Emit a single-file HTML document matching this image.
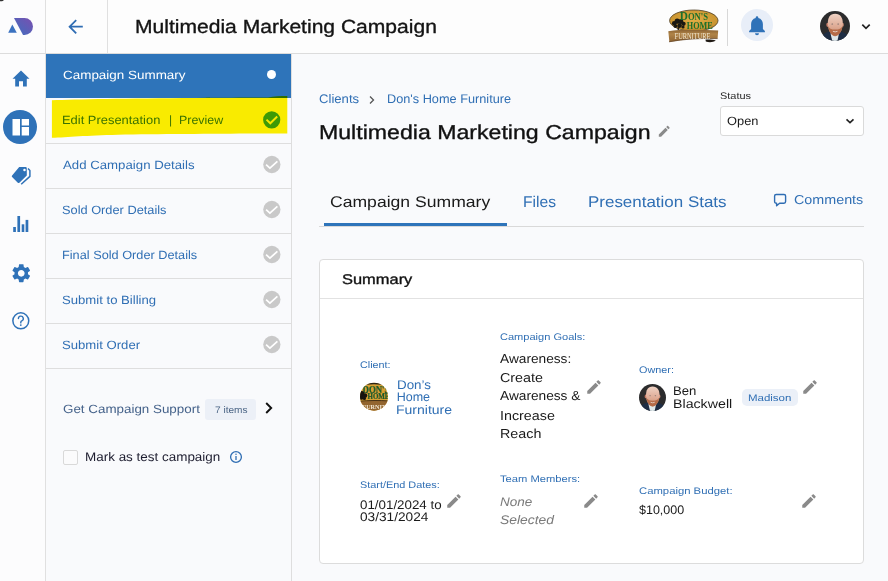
<!DOCTYPE html>
<html><head><meta charset="utf-8">
<style>
*{box-sizing:border-box;margin:0;padding:0}
html,body{width:888px;height:581px;overflow:hidden;background:#f9fafc;font-family:"Liberation Sans",sans-serif;position:relative}
.a{position:absolute}
.t{position:absolute;white-space:pre;line-height:1;transform-origin:0 0;text-rendering:geometricPrecision}
svg{position:absolute;display:block}
</style></head><body>

<!-- left icon rail -->
<div class="a" style="left:0;top:0;width:46px;height:581px;background:#fcfcfd;border-right:1px solid #e0e0e0"></div>
<!-- header -->
<div class="a" style="left:46px;top:0;width:842px;height:54px;background:#fdfdfd;border-bottom:1px solid #dcdcdc"></div>
<div class="a" style="left:0;top:53px;width:46px;height:1px;background:#dcdcdc"></div>
<div class="a" style="left:107px;top:0;width:1px;height:53px;background:#e0e0e0"></div>

<!-- logo -->
<svg style="left:0;top:0" width="45" height="53" viewBox="0 0 45 53">
  <defs><linearGradient id="lg" x1="0" y1="1" x2="1" y2="0"><stop offset="0" stop-color="#3d6fc0"/><stop offset="1" stop-color="#7a4fb0"/></linearGradient></defs>
  <path d="M8.2 32.7 L12.3 24.6 L16.8 32.7 Z" fill="#3b72c0"/>
  <path d="M14 18 L24.5 18 A8.5 8.5 0 0 1 24.5 35 L23 35 Z" fill="url(#lg)"/>
</svg>

<!-- back arrow -->
<svg style="left:66px;top:18px" width="18" height="18" viewBox="0 0 18 18">
  <path d="M16.8 8.7 H3.6 M10.2 2.1 L3.6 8.7 L10.2 15.3" stroke="#2f6db3" stroke-width="1.8" fill="none" stroke-linecap="butt" stroke-linejoin="miter"/>
</svg>


<!-- rail icons -->
<svg style="left:11px;top:69px" width="20" height="19" viewBox="0 0 20 19">
  <path d="M10 1.5 L18.5 9.7 H15.8 V17.5 H12 V12.2 H8 V17.5 H4.2 V9.7 H1.5 Z" fill="#2f72b8"/>
</svg>
<svg style="left:3px;top:110px" width="34" height="34" viewBox="0 0 34 34">
  <circle cx="17" cy="17" r="17" fill="#2f72b8"/>
  <rect x="9.5" y="9" width="7.5" height="16.5" fill="#fff"/>
  <rect x="18.7" y="9" width="7.3" height="6.5" fill="#fff"/>
  <rect x="18.7" y="17" width="7.3" height="8.5" fill="#fff"/>
</svg>
<svg style="left:11px;top:166px" width="21" height="20" viewBox="0 0 21 20">
  <path d="M8.2 0.9 H14.5 Q15.8 0.9 15.8 2.2 V9.4 L8.4 16.7 Q7.6 17.4 6.8 16.7 L1.1 11 Q0.3 10.2 1.1 9.4 Z" fill="#2f72b8"/>
  <circle cx="13.5" cy="4.1" r="1.25" fill="#fff"/>
  <path d="M17 2.4 L18.9 4.4 V10.4 L10.2 18.3" stroke="#2f72b8" stroke-width="1.5" fill="none" stroke-linejoin="round"/>
</svg>
<svg style="left:12px;top:215px" width="18" height="18" viewBox="0 0 18 18">
  <rect x="1.2" y="12" width="2.7" height="5" fill="#2f72b8"/>
  <rect x="5.4" y="1" width="2.7" height="16" fill="#2f72b8"/>
  <rect x="9.7" y="9.3" width="2.6" height="7.7" fill="#2f72b8"/>
  <rect x="13.6" y="4.9" width="2.7" height="12.1" fill="#2f72b8"/>
</svg>
<svg style="left:9.5px;top:261.8px" width="22.5" height="22.5" viewBox="0 0 24 24">
  <path fill="#2f72b8" d="M19.14 12.94c.04-.3.06-.61.06-.94 0-.32-.02-.64-.07-.94l2.03-1.58c.18-.14.23-.41.12-.61l-1.92-3.32c-.12-.22-.37-.29-.59-.22l-2.39.96c-.5-.38-1.03-.7-1.62-.94l-.36-2.54c-.04-.24-.24-.41-.48-.41h-3.84c-.24 0-.43.17-.47.41l-.36 2.54c-.59.24-1.13.57-1.62.94l-2.39-.96c-.22-.08-.47 0-.59.22L2.74 8.87c-.12.21-.08.47.12.61l2.03 1.58c-.05.3-.09.63-.09.94s.02.64.07.94l-2.03 1.58c-.18.14-.23.41-.12.61l1.92 3.32c.12.22.37.29.59.22l2.39-.96c.5.38 1.03.7 1.62.94l.36 2.54c.05.24.24.41.48.41h3.84c.24 0 .44-.17.47-.41l.36-2.54c.59-.24 1.13-.56 1.62-.94l2.39.96c.22.08.47 0 .59-.22l1.92-3.32c.12-.22.07-.47-.12-.61l-2.01-1.58zM12 15.6c-1.98 0-3.6-1.62-3.6-3.6s1.62-3.6 3.6-3.6 3.6 1.62 3.6 3.6-1.62 3.6-3.6 3.6z"/>
</svg>
<svg style="left:11px;top:311px" width="20" height="20" viewBox="0 0 20 20">
  <circle cx="9.8" cy="9.8" r="7.95" stroke="#2f72b8" stroke-width="1.5" fill="none"/>
  <path d="M7.4 7.6 a2.45 2.45 0 1 1 3.4 2.25 c-.65.3 -1 .75 -1 1.5 v.55" stroke="#2f72b8" stroke-width="1.4" fill="none" stroke-linecap="round"/>
  <circle cx="9.8" cy="14.1" r="0.9" fill="#2f72b8"/>
</svg>

<!-- header right -->
<div class="a" style="left:727px;top:9px;width:1px;height:37px;background:#d8d8d8"></div>
<div class="a" style="left:741px;top:9px;width:32px;height:32px;border-radius:50%;background:#e8eef8"></div>
<svg style="left:748px;top:15px" width="18" height="21" viewBox="0 0 18 21">
  <path d="M9 1.2 a1.3 1.3 0 0 1 1.3 1.3 v.5 c2.9 .7 4.6 3.2 4.6 6.1 v4.9 l2 2 v1.2 H1.1 v-1.2 l2 -2 V9.1 c0 -2.9 1.7 -5.4 4.6 -6.1 v-.5 A1.3 1.3 0 0 1 9 1.2Z" fill="#2f72b8"/>
  <path d="M7 18.3 h4 a2 2 0 0 1 -4 0Z" fill="#2f72b8"/>
</svg>



<svg style="left:660px;top:5px" width="70" height="45" viewBox="660 5 70 45">
  <defs><radialGradient id="og" cx="0.5" cy="0.45" r="0.6"><stop offset="0" stop-color="#e3ae45"/><stop offset="1" stop-color="#c48f2c"/></radialGradient>
  <linearGradient id="bg2" x1="0" y1="0" x2="0" y2="1"><stop offset="0" stop-color="#8a6232"/><stop offset="0.35" stop-color="#b08448"/><stop offset="1" stop-color="#8e6434"/></linearGradient></defs>
  <ellipse cx="693.8" cy="20.6" rx="24.2" ry="10.6" fill="url(#og)" stroke="#4d3d24" stroke-width="0.8"/>
  <g fill="#1a1812">
    <circle cx="674.2" cy="23.2" r="2.3"/><circle cx="677.2" cy="21.2" r="2.6"/><circle cx="680.8" cy="21.6" r="2.5"/>
    <circle cx="683.6" cy="23.8" r="2.1"/><circle cx="675.4" cy="26" r="1.9"/><circle cx="679.6" cy="25.6" r="2.3"/><circle cx="683" cy="27" r="1.6"/>
    <rect x="677.6" y="26" width="1.3" height="4"/>
  </g>
  <text x="679.7" y="20.4" font-family="Liberation Serif" font-size="12.5" font-weight="bold" fill="#1c6f2b" textLength="28.3" lengthAdjust="spacingAndGlyphs">D<tspan font-size="9.5">ON'S</tspan></text>
  <text x="686.8" y="29" font-family="Liberation Serif" font-size="9.8" font-weight="bold" fill="#1c6f2b" textLength="26" lengthAdjust="spacingAndGlyphs">HOME</text>
  <path d="M668.3 31.2 C680 29.2 700 29.6 718.2 30.4 L717.6 38.6 C700 38.2 684 39.2 669.4 42 Z" fill="url(#bg2)"/>
  <path d="M669 41.8 C684 39 700 38.1 717.6 38.6" stroke="#5e4022" stroke-width="0.7" fill="none"/>
  <text x="674.6" y="39.2" font-family="Liberation Serif" font-size="7.6" fill="#f1e6cf" textLength="35.8" lengthAdjust="spacingAndGlyphs">FURNITURE</text>
  <path d="M705.5 39.6 C709 39.4 713 39.6 715.8 40.6 C713 42.6 709 42.6 705.8 41.6 Z" fill="#201a14"/>
</svg>
<svg style="left:820px;top:11px" width="30" height="30" viewBox="0 0 30 30">
  <defs><clipPath id="ac"><circle cx="15" cy="15" r="15"/></clipPath>
  <linearGradient id="acs" x1="0" y1="0" x2="0" y2="1"><stop offset="0" stop-color="#efd2c4"/><stop offset="0.6" stop-color="#deaa94"/><stop offset="1" stop-color="#c98a6c"/></linearGradient></defs>
  <g clip-path="url(#ac)">
  <rect width="30" height="30" fill="#2c2c2d"/>
  <path d="M-1 31 C1 24 5 21.5 10 20.5 L20 20.5 C25 21.5 29 24 31 31 Z" fill="#1e2d44"/>
  <path d="M10.5 22.5 L19 22.5 L17.2 31 L12.5 31 Z" fill="#dfe8ea"/>
  <ellipse cx="7.6" cy="13.8" rx="1.3" ry="2.1" fill="#c47a66"/>
  <ellipse cx="22.6" cy="13.8" rx="1.2" ry="2" fill="#c98a74"/>
  <path d="M15.1 2.8 C20.5 2.8 22.8 7 22.8 12.5 C22.8 19 19.5 24.5 15.1 24.5 C10.7 24.5 7.8 19 7.8 12.5 C7.8 7 9.7 2.8 15.1 2.8Z" fill="url(#acs)"/>
  <path d="M8 14.5 C8.8 20 11.2 25 15.2 25.2 C19.2 25 21.8 20 22.6 14.5 C21.5 17.5 19.5 18.6 15.2 18.6 C11 18.6 9 17.5 8 14.5Z" fill="#b06440" opacity="0.85"/>
  <path d="M12.9 20.3 Q15.2 21.5 17.5 20.3" stroke="#e9d6cc" stroke-width="0.9" fill="none"/>
  <ellipse cx="12.3" cy="13" rx="0.9" ry="0.5" fill="#7a6a68"/>
  <ellipse cx="18.2" cy="13" rx="0.9" ry="0.5" fill="#7a6a68"/>
  </g>
</svg>
<svg style="left:858px;top:21px" width="16" height="12" viewBox="0 0 16 12">
  <path d="M4.3 3.6 L8 7.3 L11.7 3.6" stroke="#222" stroke-width="1.7" fill="none"/>
</svg>
<svg style="left:0;top:0" width="6" height="3" viewBox="0 0 6 3"><ellipse cx="0.3" cy="0" rx="3.4" ry="1.3" fill="#333"/></svg>

<!-- nav panel -->
<div class="a" style="left:46px;top:54px;width:246px;height:527px;background:#f9fafc;border-right:1px solid #dedede"></div>
<div class="a" style="left:46px;top:54px;width:245px;height:44px;background:#2e74ba"></div>
<div class="a" style="left:267px;top:70px;width:9px;height:9px;border-radius:50%;background:#fff"></div>

<div class="a" style="left:46px;top:143px;width:245px;height:1px;background:#dedede"></div>
<div class="a" style="left:46px;top:188px;width:245px;height:1px;background:#dedede"></div>
<div class="a" style="left:46px;top:233px;width:245px;height:1px;background:#dedede"></div>
<div class="a" style="left:46px;top:278px;width:245px;height:1px;background:#dedede"></div>
<div class="a" style="left:46px;top:323px;width:245px;height:1px;background:#dedede"></div>
<div class="a" style="left:46px;top:368px;width:245px;height:1px;background:#dedede"></div>

<!-- highlighter -->
<svg style="left:46px;top:94px;mix-blend-mode:multiply" width="246" height="50" viewBox="0 0 246 50">
  <path d="M5.9 6.2 C30 5.2 80 4.3 150 3.9 C190 3.7 215 3.6 222 3.4 C228 2.2 234 1.9 241.3 1.9 L241.3 39.4 C200 39.6 120 40 72 40.7 C40 41.3 22 43.4 5.9 43.7 Z" fill="#fff000"/>
</svg>


<svg style="left:262px;top:110px" width="20" height="20" viewBox="0 0 20 20">
  <circle cx="9.7" cy="9.8" r="8.6" fill="#3d9a06"/>
  <path d="M4.5 9.6 L8.3 13.3 L15.2 6.5" stroke="#f8e800" stroke-width="1.9" fill="none"/>
</svg>
<svg style="left:262px;top:155px" width="20" height="20" viewBox="0 0 20 20">
  <circle cx="9.85" cy="9.5" r="8.65" fill="#c9c9c9"/>
  <path d="M4.1 9.7 L7.9 13.1 L15.4 6.4" stroke="#fff" stroke-width="1.75" fill="none"/>
</svg>
<svg style="left:262px;top:200px" width="20" height="20" viewBox="0 0 20 20">
  <circle cx="9.85" cy="9.5" r="8.65" fill="#c9c9c9"/>
  <path d="M4.1 9.7 L7.9 13.1 L15.4 6.4" stroke="#fff" stroke-width="1.75" fill="none"/>
</svg>
<svg style="left:262px;top:245px" width="20" height="20" viewBox="0 0 20 20">
  <circle cx="9.85" cy="9.5" r="8.65" fill="#c9c9c9"/>
  <path d="M4.1 9.7 L7.9 13.1 L15.4 6.4" stroke="#fff" stroke-width="1.75" fill="none"/>
</svg>
<svg style="left:262px;top:290px" width="20" height="20" viewBox="0 0 20 20">
  <circle cx="9.85" cy="9.5" r="8.65" fill="#c9c9c9"/>
  <path d="M4.1 9.7 L7.9 13.1 L15.4 6.4" stroke="#fff" stroke-width="1.75" fill="none"/>
</svg>
<svg style="left:262px;top:335px" width="20" height="20" viewBox="0 0 20 20">
  <circle cx="9.85" cy="9.5" r="8.65" fill="#c9c9c9"/>
  <path d="M4.1 9.7 L7.9 13.1 L15.4 6.4" stroke="#fff" stroke-width="1.75" fill="none"/>
</svg>

<div class="a" style="left:205px;top:399px;width:51px;height:21px;border-radius:3px;background:#ecf0f7"></div>
<svg style="left:263px;top:401px" width="12" height="14" viewBox="0 0 12 14">
  <path d="M3.2 2 L8.2 7 L3.2 12" stroke="#111" stroke-width="1.9" fill="none"/>
</svg>
<div class="a" style="left:63px;top:450px;width:15px;height:15px;border:1px solid #d9d9d9;border-radius:2px;background:#fbfbfc"></div>
<svg style="left:229px;top:450px" width="14" height="14" viewBox="0 0 14 14">
  <circle cx="7" cy="7" r="5.4" stroke="#2f6db3" stroke-width="1.3" fill="none"/>
  <rect x="6.35" y="6" width="1.3" height="4" fill="#2f6db3"/>
  <circle cx="7" cy="4.3" r="0.75" fill="#2f6db3"/>
</svg>


<!-- main content -->
<svg style="left:367px;top:94px" width="10" height="12" viewBox="0 0 10 12">
  <path d="M3 2.5 L6.5 6 L3 9.5" stroke="#555" stroke-width="1.3" fill="none"/>
</svg>
<svg style="left:656.6px;top:124px" width="14.5" height="14.5" viewBox="0 0 24 24">
  <path fill="#8a8a8a" d="M3 17.25V21h3.75L17.81 9.94l-3.75-3.75L3 17.25zM20.71 7.04c.39-.39.39-1.02 0-1.41l-2.34-2.34c-.39-.39-1.02-.39-1.41 0l-1.83 1.83 3.75 3.75 1.83-1.83z"/>
</svg>

<div class="a" style="left:720px;top:106px;width:144px;height:30px;border:1px solid #dadada;border-radius:3px;background:#fff"></div>
<svg style="left:843px;top:113.5px" width="14" height="14" viewBox="0 0 14 14">
  <path d="M3.5 5.3 L7 8.6 L10.5 5.3" stroke="#222" stroke-width="1.6" fill="none"/>
</svg>

<!-- tabs -->
<svg style="left:772px;top:192px" width="16" height="16" viewBox="0 0 16 16">
  <path d="M4.2 2.5 H12 Q13.6 2.5 13.6 4.1 V9.6 Q13.6 11.2 12 11.2 H7.6 L4.6 13.8 V11.2 Q2.6 11.2 2.6 9.6 V4.1 Q2.6 2.5 4.2 2.5 Z" stroke="#2f6db3" stroke-width="1.4" fill="none" stroke-linejoin="round"/>
</svg>
<div class="a" style="left:319px;top:226px;width:545px;height:1px;background:#d9d9d9"></div>
<div class="a" style="left:324px;top:223px;width:183px;height:3px;background:#2e74ba"></div>

<!-- card -->
<div class="a" style="left:319px;top:259px;width:545px;height:305px;border:1px solid #dcdcdc;border-radius:4px;background:#fff"></div>
<div class="a" style="left:320px;top:298px;width:543px;height:1px;background:#e2e2e2"></div>

<svg style="left:359px;top:382px" width="30" height="30" viewBox="359 382 30 30">
  <defs><clipPath id="cc"><circle cx="374" cy="396.7" r="14"/></clipPath></defs>
  <g clip-path="url(#cc)">
  <rect x="359" y="382" width="30" height="30" fill="#d8a032"/>
  <path d="M362 386 C367 382.5 381 382.5 386 386" stroke="#2a2418" stroke-width="1.6" fill="none"/>
  <text x="362.5" y="392.8" font-family="Liberation Serif" font-size="9.5" font-weight="bold" fill="#1a6a2a" stroke="#123" stroke-width="0.2" textLength="27" lengthAdjust="spacingAndGlyphs">DON'S</text>
  <text x="367.5" y="399.4" font-family="Liberation Serif" font-size="7.8" font-weight="bold" fill="#1a6a2a" stroke="#123" stroke-width="0.2" textLength="22" lengthAdjust="spacingAndGlyphs">HOME</text>
  <g fill="#16140f"><circle cx="361.8" cy="393.6" r="2.6"/><circle cx="365" cy="395.6" r="2.3"/><circle cx="361.6" cy="397.6" r="2.2"/><circle cx="364.4" cy="398.4" r="1.6"/></g>
  <path d="M359 401.6 C368 400.6 380 400.6 389 401.2 L389 412 L359 412 Z" fill="#93652f"/>
  <path d="M359 401.3 C368 400.3 380 400.3 389 400.9" stroke="#3a2814" stroke-width="0.9" fill="none"/>
  <text x="362.4" y="408.6" font-family="Liberation Serif" font-size="6.6" font-weight="bold" fill="#f4ead6" textLength="23.5" lengthAdjust="spacingAndGlyphs">FURNIT</text>
  </g>
</svg>

<svg style="left:585px;top:378px" width="18" height="18" viewBox="0 0 24 24">
  <path fill="#8a8a8a" d="M3 17.25V21h3.75L17.81 9.94l-3.75-3.75L3 17.25zM20.71 7.04c.39-.39.39-1.02 0-1.41l-2.34-2.34c-.39-.39-1.02-.39-1.41 0l-1.83 1.83 3.75 3.75 1.83-1.83z"/>
</svg>

<svg style="left:639px;top:384px" width="27" height="27" viewBox="0 0 30 30">
  <defs><clipPath id="ac2"><circle cx="15" cy="15" r="15"/></clipPath>
  <linearGradient id="ac2s" x1="0" y1="0" x2="0" y2="1"><stop offset="0" stop-color="#efd2c4"/><stop offset="0.6" stop-color="#deaa94"/><stop offset="1" stop-color="#c98a6c"/></linearGradient></defs>
  <g clip-path="url(#ac2)">
  <rect width="30" height="30" fill="#2c2c2d"/>
  <path d="M-1 31 C1 24 5 21.5 10 20.5 L20 20.5 C25 21.5 29 24 31 31 Z" fill="#1e2d44"/>
  <path d="M10.5 22.5 L19 22.5 L17.2 31 L12.5 31 Z" fill="#dfe8ea"/>
  <ellipse cx="7.6" cy="13.8" rx="1.3" ry="2.1" fill="#c47a66"/>
  <ellipse cx="22.6" cy="13.8" rx="1.2" ry="2" fill="#c98a74"/>
  <path d="M15.1 2.8 C20.5 2.8 22.8 7 22.8 12.5 C22.8 19 19.5 24.5 15.1 24.5 C10.7 24.5 7.8 19 7.8 12.5 C7.8 7 9.7 2.8 15.1 2.8Z" fill="url(#ac2s)"/>
  <path d="M8 14.5 C8.8 20 11.2 25 15.2 25.2 C19.2 25 21.8 20 22.6 14.5 C21.5 17.5 19.5 18.6 15.2 18.6 C11 18.6 9 17.5 8 14.5Z" fill="#b06440" opacity="0.85"/>
  <path d="M12.9 20.3 Q15.2 21.5 17.5 20.3" stroke="#e9d6cc" stroke-width="0.9" fill="none"/>
  <ellipse cx="12.3" cy="13" rx="0.9" ry="0.5" fill="#7a6a68"/>
  <ellipse cx="18.2" cy="13" rx="0.9" ry="0.5" fill="#7a6a68"/>
  </g>
</svg>
<div class="a" style="left:742px;top:389px;width:56px;height:17px;border-radius:5px;background:#ebf0f8"></div>
<svg style="left:801px;top:377.5px" width="18" height="18" viewBox="0 0 24 24">
  <path fill="#8a8a8a" d="M3 17.25V21h3.75L17.81 9.94l-3.75-3.75L3 17.25zM20.71 7.04c.39-.39.39-1.02 0-1.41l-2.34-2.34c-.39-.39-1.02-.39-1.41 0l-1.83 1.83 3.75 3.75 1.83-1.83z"/>
</svg>

<svg style="left:445px;top:492px" width="18" height="18" viewBox="0 0 24 24">
  <path fill="#8a8a8a" d="M3 17.25V21h3.75L17.81 9.94l-3.75-3.75L3 17.25zM20.71 7.04c.39-.39.39-1.02 0-1.41l-2.34-2.34c-.39-.39-1.02-.39-1.41 0l-1.83 1.83 3.75 3.75 1.83-1.83z"/>
</svg>

<svg style="left:582px;top:492px" width="18" height="18" viewBox="0 0 24 24">
  <path fill="#8a8a8a" d="M3 17.25V21h3.75L17.81 9.94l-3.75-3.75L3 17.25zM20.71 7.04c.39-.39.39-1.02 0-1.41l-2.34-2.34c-.39-.39-1.02-.39-1.41 0l-1.83 1.83 3.75 3.75 1.83-1.83z"/>
</svg>

<svg style="left:800px;top:492px" width="18" height="18" viewBox="0 0 24 24">
  <path fill="#8a8a8a" d="M3 17.25V21h3.75L17.81 9.94l-3.75-3.75L3 17.25zM20.71 7.04c.39-.39.39-1.02 0-1.41l-2.34-2.34c-.39-.39-1.02-.39-1.41 0l-1.83 1.83 3.75 3.75 1.83-1.83z"/>
</svg>

<div class="t" style="left:134.9px;top:18px;font-size:19px;color:#141414;transform:scaleX(1.108);-webkit-text-stroke:0.35px #141414;">Multimedia Marketing Campaign</div>
<div class="t" style="left:63px;top:69px;font-size:12px;color:#ffffff;transform:scaleX(1.120);">Campaign Summary</div>
<div class="t" style="left:61.9px;top:114px;font-size:12px;color:#3a7200;transform:scaleX(1.076);">Edit Presentation</div>
<div class="t" style="left:169px;top:114px;font-size:12px;color:#3a7200;">|</div>
<div class="t" style="left:179.4px;top:114px;font-size:12px;color:#3a7200;transform:scaleX(1.035);">Preview</div>
<div class="t" style="left:63px;top:159px;font-size:12px;color:#306fb4;transform:scaleX(1.102);">Add Campaign Details</div>
<div class="t" style="left:61.9px;top:204px;font-size:12px;color:#306fb4;transform:scaleX(1.066);">Sold Order Details</div>
<div class="t" style="left:61.9px;top:249px;font-size:12px;color:#306fb4;transform:scaleX(1.061);">Final Sold Order Details</div>
<div class="t" style="left:61.9px;top:294px;font-size:12px;color:#306fb4;transform:scaleX(1.094);">Submit to Billing</div>
<div class="t" style="left:61.9px;top:339px;font-size:12px;color:#306fb4;transform:scaleX(1.094);">Submit Order</div>
<div class="t" style="left:62.6px;top:403px;font-size:12px;color:#45628a;transform:scaleX(1.115);">Get Campaign Support</div>
<div class="t" style="left:214.5px;top:406px;font-size:9.5px;color:#4b6585;transform:scaleX(1.061);">7 items</div>
<div class="t" style="left:85.0px;top:451px;font-size:12.5px;color:#1e1e30;transform:scaleX(1.076);">Mark as test campaign</div>
<div class="t" style="left:318.9px;top:93px;font-size:12.5px;color:#306fb4;transform:scaleX(1.049);">Clients</div>
<div class="t" style="left:386.9px;top:93px;font-size:12.5px;color:#306fb4;transform:scaleX(1.018);">Don's Home Furniture</div>
<div class="t" style="left:318.9px;top:123px;font-size:20px;color:#111111;transform:scaleX(1.156);-webkit-text-stroke:0.35px #111111;">Multimedia Marketing Campaign</div>
<div class="t" style="left:720.2px;top:92px;font-size:9.5px;color:#2a2a2a;transform:scaleX(1.151);">Status</div>
<div class="t" style="left:726.6px;top:115px;font-size:12px;color:#1a1a1a;transform:scaleX(1.070);">Open</div>
<div class="t" style="left:330.0px;top:195px;font-size:15.5px;color:#1a1a1a;transform:scaleX(1.134);">Campaign Summary</div>
<div class="t" style="left:523.2px;top:195px;font-size:15.5px;color:#306fb4;transform:scaleX(1.008);">Files</div>
<div class="t" style="left:587.8px;top:195px;font-size:15.5px;color:#306fb4;transform:scaleX(1.094);">Presentation Stats</div>
<div class="t" style="left:793.7px;top:193px;font-size:13px;color:#306fb4;transform:scaleX(1.102);">Comments</div>
<div class="t" style="left:342.2px;top:272px;font-size:14px;color:#111111;transform:scaleX(1.174);-webkit-text-stroke:0.35px #111111;">Summary</div>
<div class="t" style="left:360px;top:361px;font-size:9.5px;color:#306fb4;transform:scaleX(1.136);">Client:</div>
<div class="t" style="left:396.7px;top:379px;font-size:12.5px;color:#306fb4;transform:scaleX(1.071);">Don’s</div>
<div class="t" style="left:396.7px;top:391px;font-size:12.5px;color:#306fb4;">Home</div>
<div class="t" style="left:396.1px;top:404px;font-size:12.5px;color:#306fb4;transform:scaleX(1.121);">Furniture</div>
<div class="t" style="left:500px;top:333px;font-size:9.5px;color:#306fb4;transform:scaleX(1.163);">Campaign Goals:</div>
<div class="t" style="left:500px;top:352px;font-size:13px;color:#1a1a1a;transform:scaleX(1.053);">Awareness:</div>
<div class="t" style="left:500px;top:371px;font-size:13px;color:#1a1a1a;transform:scaleX(1.100);">Create</div>
<div class="t" style="left:500px;top:389px;font-size:13px;color:#1a1a1a;transform:scaleX(1.053);">Awareness &amp;</div>
<div class="t" style="left:500px;top:409px;font-size:13px;color:#1a1a1a;transform:scaleX(1.100);">Increase</div>
<div class="t" style="left:500px;top:427px;font-size:13px;color:#1a1a1a;transform:scaleX(1.100);">Reach</div>
<div class="t" style="left:639.1px;top:366px;font-size:9.5px;color:#306fb4;transform:scaleX(1.140);">Owner:</div>
<div class="t" style="left:672.5px;top:385px;font-size:12.5px;color:#1a1a1a;transform:scaleX(1.050);">Ben</div>
<div class="t" style="left:672.8px;top:398px;font-size:12.5px;color:#1a1a1a;transform:scaleX(1.136);">Blackwell</div>
<div class="t" style="left:748.0px;top:394px;font-size:9.5px;color:#306fb4;transform:scaleX(1.208);">Madison</div>
<div class="t" style="left:359.8px;top:481px;font-size:9.5px;color:#306fb4;transform:scaleX(1.145);">Start/End Dates:</div>
<div class="t" style="left:360px;top:499px;font-size:12.5px;color:#1a1a1a;transform:scaleX(1.067);">01/01/2024 to</div>
<div class="t" style="left:360px;top:511px;font-size:12.5px;color:#1a1a1a;transform:scaleX(1.093);">03/31/2024</div>
<div class="t" style="left:500.0px;top:475px;font-size:9.5px;color:#306fb4;transform:scaleX(1.176);">Team Members:</div>
<div class="t" style="left:500px;top:496px;font-size:12.5px;color:#7a7a7a;transform:scaleX(1.081);font-style:italic;">None</div>
<div class="t" style="left:500px;top:514px;font-size:12.5px;color:#7a7a7a;transform:scaleX(1.110);font-style:italic;">Selected</div>
<div class="t" style="left:639px;top:487px;font-size:9.5px;color:#306fb4;transform:scaleX(1.189);">Campaign Budget:</div>
<div class="t" style="left:639px;top:504px;font-size:12.5px;color:#1a1a1a;">$10,000</div>
</body></html>
